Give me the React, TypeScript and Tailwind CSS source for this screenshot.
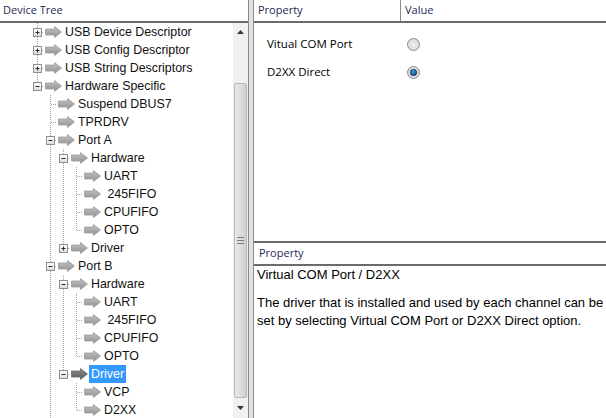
import React from "react";

type Item = {
  label: string;
  level: number;
  exp?: "+" | "-";
  guides: boolean[];
  next: boolean;
  selected?: boolean;
};

const ITEMS: Item[] = [
  { label: "USB Device Descriptor", level: 0, exp: "+", guides: [], next: true },
  { label: "USB Config Descriptor", level: 0, exp: "+", guides: [], next: true },
  { label: "USB String Descriptors", level: 0, exp: "+", guides: [], next: true },
  { label: "Hardware Specific", level: 0, exp: "-", guides: [], next: false },
  { label: "Suspend DBUS7", level: 1, guides: [false], next: true },
  { label: "TPRDRV", level: 1, guides: [false], next: true },
  { label: "Port A", level: 1, exp: "-", guides: [false], next: true },
  { label: "Hardware", level: 2, exp: "-", guides: [false, true], next: true },
  { label: "UART", level: 3, guides: [false, true, true], next: true },
  { label: "\u00a0245FIFO", level: 3, guides: [false, true, true], next: true },
  { label: "CPUFIFO", level: 3, guides: [false, true, true], next: true },
  { label: "OPTO", level: 3, guides: [false, true, true], next: false },
  { label: "Driver", level: 2, exp: "+", guides: [false, true], next: false },
  { label: "Port B", level: 1, exp: "-", guides: [false], next: true },
  { label: "Hardware", level: 2, exp: "-", guides: [false, true], next: true },
  { label: "UART", level: 3, guides: [false, true, true], next: true },
  { label: "\u00a0245FIFO", level: 3, guides: [false, true, true], next: true },
  { label: "CPUFIFO", level: 3, guides: [false, true, true], next: true },
  { label: "OPTO", level: 3, guides: [false, true, true], next: false },
  { label: "Driver", level: 2, exp: "-", guides: [false, true], next: false, selected: true },
  { label: "VCP", level: 3, guides: [false, true, false], next: true },
  { label: "D2XX", level: 3, guides: [false, true, false], next: false },
];

const DOT = "#a3a3a3";

function Guide({ on }: { on: boolean }) {
  return (
    <svg width="13" height="18" className="shrink-0">
      {on && <line x1="6.5" y1="0" x2="6.5" y2="18" stroke={DOT} strokeDasharray="1 1" />}
    </svg>
  );
}

function Connector({ next, exp }: { next: boolean; exp?: "+" | "-" }) {
  return (
    <svg width="13" height="18" className="shrink-0">
      <line x1="6.5" y1="0" x2="6.5" y2={next ? 18 : 9} stroke={DOT} strokeDasharray="1 1" />
      <line x1="7" y1="9.5" x2="13" y2="9.5" stroke={DOT} strokeDasharray="1 1" />
      {exp && (
        <g>
          <defs>
            <linearGradient id="boxg" x1="0" y1="0" x2="0" y2="1">
              <stop offset="0" stopColor="#ffffff" />
              <stop offset="1" stopColor="#dcdcdc" />
            </linearGradient>
          </defs>
          <rect x="2.5" y="5.5" width="8" height="8" fill="url(#boxg)" stroke="#8f8f8f" />
          <line x1="4.5" y1="9.5" x2="8.5" y2="9.5" stroke="#2b2b2b" />
          {exp === "+" && <line x1="6.5" y1="7.5" x2="6.5" y2="11.5" stroke="#2b2b2b" />}
        </g>
      )}
    </svg>
  );
}

function Arrow({ dark }: { dark?: boolean }) {
  const id = dark ? "arrd" : "arrl";
  return (
    <svg width="17" height="12" viewBox="0 0 17 12" className="shrink-0 ml-px">
      <defs>
        <linearGradient id={id} x1="0" y1="0" x2="0" y2="1">
          <stop offset="0" stopColor={dark ? "#8a8a8a" : "#c4c4c4"} />
          <stop offset="1" stopColor={dark ? "#5e5e5e" : "#8f8f8f"} />
        </linearGradient>
      </defs>
      <path d="M0.5 3 H9.5 V0.5 L16.5 6 L9.5 11.5 V9 H0.5 Z" fill={`url(#${id})`} stroke={dark ? "#6a6a6a" : "#9c9c9c"} strokeWidth="0.8" strokeLinejoin="round" />
    </svg>
  );
}

function Radio({ checked }: { checked?: boolean }) {
  return (
    <svg width="13" height="13" viewBox="0 0 13 13">
      <defs>
        <radialGradient id="rbg" cx="0.5" cy="0.5" r="0.5">
          <stop offset="0" stopColor="#f4f4f4" />
          <stop offset="1" stopColor="#cfcfcf" />
        </radialGradient>
        <radialGradient id="rdot" cx="0.45" cy="0.4" r="0.6">
          <stop offset="0" stopColor="#3fa3e6" />
          <stop offset="1" stopColor="#0b3b6b" />
        </radialGradient>
      </defs>
      <circle cx="6.5" cy="6.5" r="6" fill="url(#rbg)" stroke="#8c8c8c" />
      <circle cx="6.5" cy="6.5" r="4.5" fill="none" stroke="#e8e8e8" />
      {checked && <circle cx="6.5" cy="6.5" r="3.3" fill="url(#rdot)" stroke="#1a3d66" strokeWidth="0.6" />}
    </svg>
  );
}

function TreeRow({ item }: { item: Item }) {
  return (
    <div className="flex items-center h-[18px] pl-[31px]">
      {item.guides.map((g, i) => (
        <Guide key={i} on={g} />
      ))}
      <Connector next={item.next} exp={item.exp} />
      <Arrow dark={item.selected} />
      <span
        className={
          item.selected
            ? "ml-[1px] h-[18px] leading-[18px] px-[2px] bg-[#3399ff] text-white whitespace-pre"
            : "ml-[3px] leading-[18px] text-[#111] whitespace-pre"
        }
      >
        {item.label}
      </span>
    </div>
  );
}

function Scrollbar() {
  return (
    <div className="w-[15px] bg-[#f0f0f0] flex flex-col items-center shrink-0">
      <div className="h-[17px] w-full flex items-center justify-center">
        <svg width="7" height="4"><path d="M0 4 L3.5 0 L7 4 Z" fill="#3a3a3a" /></svg>
      </div>
      <div className="h-[43px]" />
      <div className="w-[13px] h-[315px] rounded-[2px] border border-[#b8b8b8] bg-gradient-to-r from-[#e8e8e8] via-[#dedede] to-[#cfcfcf] flex items-center justify-center">
        <div className="flex flex-col gap-[2px]">
          <div className="w-[7px] h-px bg-[#7a7a7a]" />
          <div className="w-[7px] h-px bg-[#7a7a7a]" />
          <div className="w-[7px] h-px bg-[#7a7a7a]" />
        </div>
      </div>
      <div className="flex-1 w-full flex items-center justify-center">
        <svg width="7" height="4"><path d="M0 0 L3.5 4 L7 0 Z" fill="#3a3a3a" /></svg>
      </div>
    </div>
  );
}

export default function App() {
  const head = "text-[#1f2a55] text-[11px] [font-family:'Open_Sans',sans-serif]";
  return (
    <div className="w-[606px] h-[418px] flex bg-white overflow-hidden [font-family:'Liberation_Sans',Arial,sans-serif]">
      <div className="w-[248px] flex flex-col shrink-0">
        <div className={`h-[23px] border-b-2 border-[#6b6b6b] pl-[3px] flex items-center ${head}`}>
          Device Tree
        </div>
        <div className="flex-1 flex min-h-0">
          <div className="flex-1 text-[12.4px] overflow-hidden">
            {ITEMS.map((it, i) => (
              <TreeRow key={i} item={it} />
            ))}
          </div>
          <Scrollbar />
        </div>
      </div>

      <div className="w-[6px] shrink-0 bg-[#dde0e7] border-x border-[#8c8c8c]" />

      <div className="flex-1 flex flex-col min-w-0">
        <div className={`h-[23px] border-b-2 border-[#6b6b6b] flex ${head}`}>
          <div className="w-[147px] border-r border-[#8c8c8c] pl-[4px] flex items-center">Property</div>
          <div className="pl-[4px] flex items-center">Value</div>
        </div>
        <div className="h-[218px] pt-[7px] text-[12px] text-black [font-family:'Open_Sans',sans-serif]">
          <div className="flex items-center h-[28px]">
            <span className="w-[153px] pl-[13px] text-[11.5px]">Vitual COM Port</span>
            <Radio />
          </div>
          <div className="flex items-center h-[28px]">
            <span className="w-[153px] pl-[13px] text-[11.5px]">D2XX Direct</span>
            <Radio checked />
          </div>
        </div>
        <div className={`h-[25px] border-y-2 border-[#6b6b6b] pl-[5px] flex items-center ${head} text-[10.5px]`}>
          Property
        </div>
        <div className="pl-[3px] pt-[1px] text-[13px] text-black">
          <div className="leading-[16px]">Virtual COM Port / D2XX</div>
          <p className="mt-[11px] leading-[18px]">
            The driver that is installed and used by each channel can be set by selecting Virtual COM Port or D2XX Direct option.
          </p>
        </div>
      </div>
    </div>
  );
}
